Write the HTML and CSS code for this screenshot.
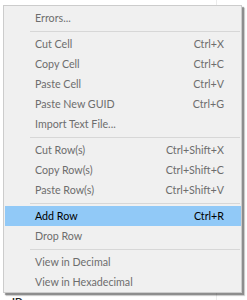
FILE: index.html
```html
<!DOCTYPE html>
<html>
<head>
<meta charset="utf-8">
<link rel="stylesheet" href="styles.css">
</head>
<body>
<div class="sheet">
  <div class="grid-v"></div>
  <span class="peek">ID</span>
</div>
<div class="menu">
  <div class="item"><span>Errors...</span></div>
  <div class="sep"></div>
  <div class="item"><span>Cut Cell</span><span>Ctrl+X</span></div>
  <div class="item"><span>Copy Cell</span><span>Ctrl+C</span></div>
  <div class="item"><span>Paste Cell</span><span>Ctrl+V</span></div>
  <div class="item"><span>Paste New GUID</span><span>Ctrl+G</span></div>
  <div class="item"><span>Import Text File...</span></div>
  <div class="sep"></div>
  <div class="item"><span>Cut Row(s)</span><span>Ctrl+Shift+X</span></div>
  <div class="item"><span>Copy Row(s)</span><span>Ctrl+Shift+C</span></div>
  <div class="item"><span>Paste Row(s)</span><span>Ctrl+Shift+V</span></div>
  <div class="sep"></div>
  <div class="item active"><span>Add Row</span><span>Ctrl+R</span></div>
  <div class="item"><span>Drop Row</span></div>
  <div class="sep"></div>
  <div class="item"><span>View in Decimal</span></div>
  <div class="item"><span>View in Hexadecimal</span></div>
</div>
</body>
</html>
```
FILE: styles.css
```css
html, body {
  margin: 0;
  padding: 0;
  background: #ffffff;
  width: 247px;
  height: 300px;
  overflow: hidden;
}
.sheet {
  position: relative;
  width: 247px;
  height: 300px;
}
.grid-v {
  position: absolute;
  left: 216px;
  top: 0;
  width: 1px;
  height: 300px;
  background: #ececec;
}
.peek {
  position: absolute;
  left: 12px;
  top: 295px;
  font: bold 10px "Lato", sans-serif;
  color: #222;
}
.menu {
  position: absolute;
  left: 3px;
  top: 5px;
  width: 237px;
  padding: 2px 0 0 0;
  background: #f0f0f0;
  border: 1px solid #cccccc;
  box-shadow: 2px 2px 1px rgba(0, 0, 0, 0.35), 3px 3px 1px rgba(0, 0, 0, 0.15);
  font-family: "Lato", sans-serif;
  font-size: 10.7px;
  color: #6d6d6d;
}
.item {
  display: flex;
  justify-content: space-between;
  height: 20px;
  line-height: 20px;
  margin: 0 0 0 1px;
  padding: 0 17px 0 30px;
}
.item.active {
  background: #91c9f7;
  color: #000000;
}
.sep {
  height: 6px;
  display: flex;
  align-items: center;
  padding: 0 1px 0 26px;
}
.sep::before {
  content: "";
  flex: 1;
  height: 1px;
  background: #d7d7d7;
}
```
